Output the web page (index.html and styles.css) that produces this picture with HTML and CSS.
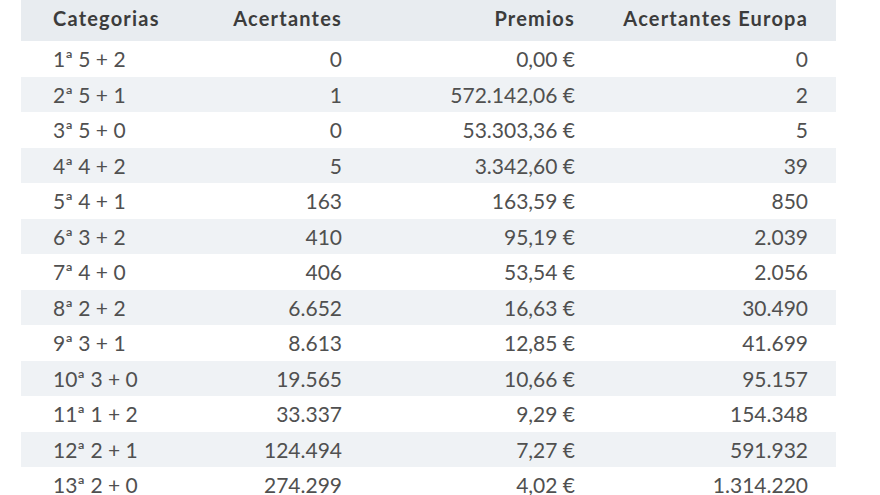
FILE: index.html
```html
<!DOCTYPE html>
<html lang="es">
<head>
<meta charset="utf-8">
<link rel="stylesheet" href="styles.css">
</head>
<body>
<table class="prizes">
  <thead>
    <tr><th class="cat">Categorias</th><th>Acertantes</th><th>Premios</th><th>Acertantes Europa</th></tr>
  </thead>
  <tbody>
    <tr><td class="cat">1ª 5 + 2</td><td>0</td><td>0,00 €</td><td>0</td></tr>
    <tr><td class="cat">2ª 5 + 1</td><td>1</td><td>572.142,06 €</td><td>2</td></tr>
    <tr><td class="cat">3ª 5 + 0</td><td>0</td><td>53.303,36 €</td><td>5</td></tr>
    <tr><td class="cat">4ª 4 + 2</td><td>5</td><td>3.342,60 €</td><td>39</td></tr>
    <tr><td class="cat">5ª 4 + 1</td><td>163</td><td>163,59 €</td><td>850</td></tr>
    <tr><td class="cat">6ª 3 + 2</td><td>410</td><td>95,19 €</td><td>2.039</td></tr>
    <tr><td class="cat">7ª 4 + 0</td><td>406</td><td>53,54 €</td><td>2.056</td></tr>
    <tr><td class="cat">8ª 2 + 2</td><td>6.652</td><td>16,63 €</td><td>30.490</td></tr>
    <tr><td class="cat">9ª 3 + 1</td><td>8.613</td><td>12,85 €</td><td>41.699</td></tr>
    <tr><td class="cat">10ª 3 + 0</td><td>19.565</td><td>10,66 €</td><td>95.157</td></tr>
    <tr><td class="cat">11ª 1 + 2</td><td>33.337</td><td>9,29 €</td><td>154.348</td></tr>
    <tr><td class="cat">12ª 2 + 1</td><td>124.494</td><td>7,27 €</td><td>591.932</td></tr>
    <tr><td class="cat">13ª 2 + 0</td><td>274.299</td><td>4,02 €</td><td>1.314.220</td></tr>
  </tbody>
</table>
</body>
</html>
```
FILE: styles.css
```css
html, body {
  margin: 0;
  padding: 0;
  background: #ffffff;
}
body {
  padding-left: 21px;
  font-family: Lato, "Liberation Sans", sans-serif;
  color: #4a4a4a;
}
.prizes {
  border-collapse: collapse;
  width: 815px;
  table-layout: fixed;
}
.prizes th, .prizes td {
  padding: 0;
  text-align: right;
  white-space: nowrap;
}
.prizes th:nth-child(1), .prizes td:nth-child(1) { width: 162px; padding-left: 32px; }
.prizes th:nth-child(2), .prizes td:nth-child(2) { width: 127px; }
.prizes th:nth-child(3), .prizes td:nth-child(3) { width: 233px; }
.prizes th:nth-child(4), .prizes td:nth-child(4) { width: 233px; padding-right: 28px; }
.prizes .cat { text-align: left; }
.prizes thead tr {
  background: #e8ecf0;
  height: 41px;
}
.prizes th {
  font-size: 20px;
  font-weight: 700;
  letter-spacing: 1.2px;
  color: #3c3c3c;
  vertical-align: middle;
  padding-bottom: 6px;
}
.prizes tbody tr {
  height: 35.5px;
}
.prizes tbody tr:nth-child(even) {
  background: #eff2f5;
}
.prizes td {
  font-size: 21px;
  font-weight: 400;
  color: #505050;
  vertical-align: middle;
}
```
